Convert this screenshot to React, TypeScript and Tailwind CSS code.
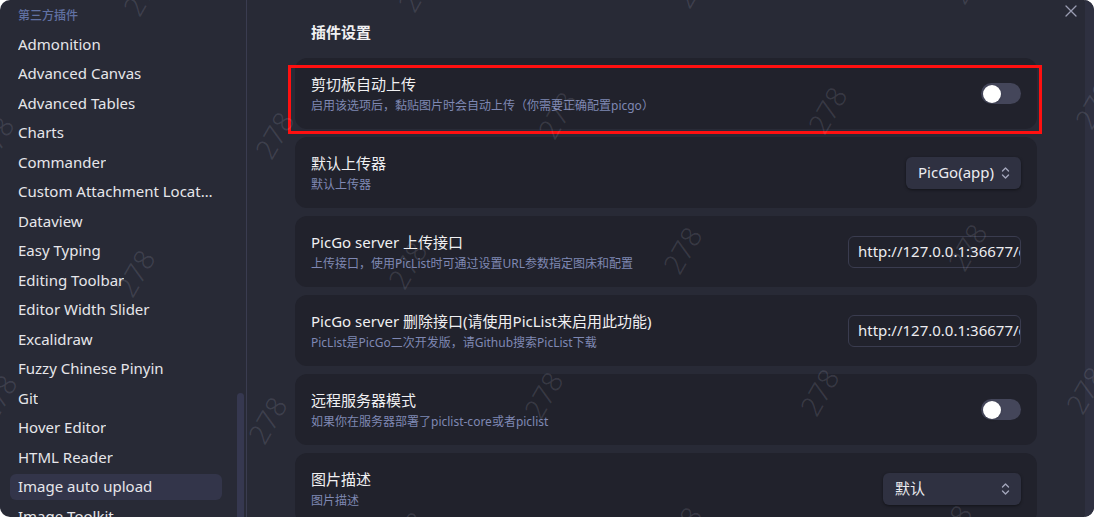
import React from "react";

const FONT = '"Noto Sans", "Noto Sans CJK SC", sans-serif';

const plugins = [
  "Admonition",
  "Advanced Canvas",
  "Advanced Tables",
  "Charts",
  "Commander",
  "Custom Attachment Location",
  "Dataview",
  "Easy Typing",
  "Editing Toolbar",
  "Editor Width Slider",
  "Excalidraw",
  "Fuzzy Chinese Pinyin",
  "Git",
  "Hover Editor",
  "HTML Reader",
  "Image auto upload",
  "Image Toolkit",
];

const marks: [number, number][] = [
  [140, -8], [415, -12], [690, -16], [965, -20],
  [-8, 140], [272, 135], [555, 115], [825, 110], [1092, 105],
  [133, 273], [405, 265], [680, 250], [965, 247],
  [-5, 398], [265, 420], [541, 395], [817, 392], [1083, 390],
  [133, 540], [405, 535], [680, 530], [950, 528],
];

function Chevrons() {
  return (
    <svg width="9" height="14" viewBox="0 0 9 14" fill="none" stroke="#a3a6bb" strokeWidth="1.4" strokeLinecap="round" strokeLinejoin="round">
      <path d="M1.5 5 L4.5 2 L7.5 5" />
      <path d="M1.5 9 L4.5 12 L7.5 9" />
    </svg>
  );
}

function Toggle() {
  return (
    <div className="w-[40px] h-[21px] rounded-full bg-[#44465a] flex items-center pl-[2px]">
      <div className="w-[18px] h-[18px] rounded-full bg-white shadow" />
    </div>
  );
}

function Select({ label, width }: { label: string; width: string }) {
  return (
    <div className={`${width} h-[32px] rounded-[6px] bg-[#2f3141] shadow-[0_1px_3px_rgba(0,0,0,0.45)] flex items-center justify-between pl-[12px] pr-[11px]`}>
      <span className="text-[15px] text-[#ececf0]">{label}</span>
      <Chevrons />
    </div>
  );
}

function Input() {
  return (
    <div className="w-[173px] h-[32px] rounded-[6px] bg-[#21222c] border border-[#3a3c4f] flex items-center pl-[9px] overflow-hidden">
      <span className="text-[15px] text-[#ececf0] whitespace-nowrap">http://127.0.0.1:36677/delete</span>
    </div>
  );
}

function Card({ title, desc, control }: { title: string; desc: string; control: React.ReactNode }) {
  return (
    <div className="h-[71px] rounded-[12px] bg-[#21222c] flex items-center justify-between px-4">
      <div className="flex flex-col pt-[1px]">
        <div className="text-[15px] leading-[20px] text-[#f0f0f2]">{title}</div>
        <div className="text-[12px] leading-[18px] mt-[3px] text-[#7f88b3]">{desc}</div>
      </div>
      {control}
    </div>
  );
}

export default function App() {
  return (
    <div className="w-[1095px] h-[517px] bg-white overflow-hidden" style={{ fontFamily: FONT }}>
      <div className="relative w-[1094px] h-[517px] rounded-[10px] bg-[#282a36] flex overflow-hidden">
        {/* Sidebar */}
        <div className="relative w-[247px] h-full border-r border-[#3a3c50] overflow-hidden">
          <div className="pt-[7px]">
            <div className="pl-[18px] text-[12px] leading-[18px] font-medium text-[#6171a3]">第三方插件</div>
            <div className="mt-[6px] flex flex-col gap-[3.5px]">
              {plugins.map((p) => (
                <div
                  key={p}
                  className={`ml-[10px] w-[212px] h-[26px] shrink-0 rounded-[6px] px-2 flex items-center text-[15px] text-[#e6e6ea] ${p === "Image auto upload" ? "bg-[#33354a]" : ""}`}
                >
                  <span className="truncate">{p}</span>
                </div>
              ))}
            </div>
          </div>
          <div className="absolute left-[237px] top-[393px] w-[7px] h-[140px] rounded-full bg-[#363850]" />
        </div>

        {/* Content */}
        <div className="flex-1 h-full px-12 pt-[20px]">
          <div className="text-[15px] leading-[24px] font-bold text-[#f0f0f2] pl-4">插件设置</div>
          <div className="mt-[14px] flex flex-col gap-[8px]">
            <Card title="剪切板自动上传" desc="启用该选项后，黏贴图片时会自动上传（你需要正确配置picgo）" control={<Toggle />} />
            <Card title="默认上传器" desc="默认上传器" control={<Select label="PicGo(app)" width="w-[115px]" />} />
            <Card title="PicGo server 上传接口" desc="上传接口，使用PicList时可通过设置URL参数指定图床和配置" control={<Input />} />
            <Card title="PicGo server 删除接口(请使用PicList来启用此功能)" desc="PicList是PicGo二次开发版，请Github搜索PicList下载" control={<Input />} />
            <Card title="远程服务器模式" desc="如果你在服务器部署了piclist-core或者piclist" control={<Toggle />} />
            <Card title="图片描述" desc="图片描述" control={<Select label="默认" width="w-[138px]" />} />
          </div>
        </div>

        {/* right scrollbar strip */}
        <div className="w-[9px] h-full bg-[#2e3040]" />

        {/* close */}
        <div className="absolute left-[1064px] top-[4px] w-[14px] h-[14px] flex items-center justify-center">
          <svg width="12" height="12" viewBox="0 0 12 12" stroke="#9a9db2" strokeWidth="1.3" strokeLinecap="round">
            <path d="M1 1 L11 11 M11 1 L1 11" />
          </svg>
        </div>

        {/* annotation box */}
        <div className="absolute left-[288px] top-[65px] w-[754px] h-[69px] border-[3px] border-[#ff1010] pointer-events-none" />

        {/* watermarks */}
        {marks.map(([x, y], i) => (
          <div
            key={i}
            className="absolute pointer-events-none text-[28px] font-light text-[rgba(210,212,230,0.14)] leading-none"
            style={{ left: x - 22, top: y - 14, transform: "rotate(-60deg)" }}
          >
            278
          </div>
        ))}
      </div>
    </div>
  );
}
